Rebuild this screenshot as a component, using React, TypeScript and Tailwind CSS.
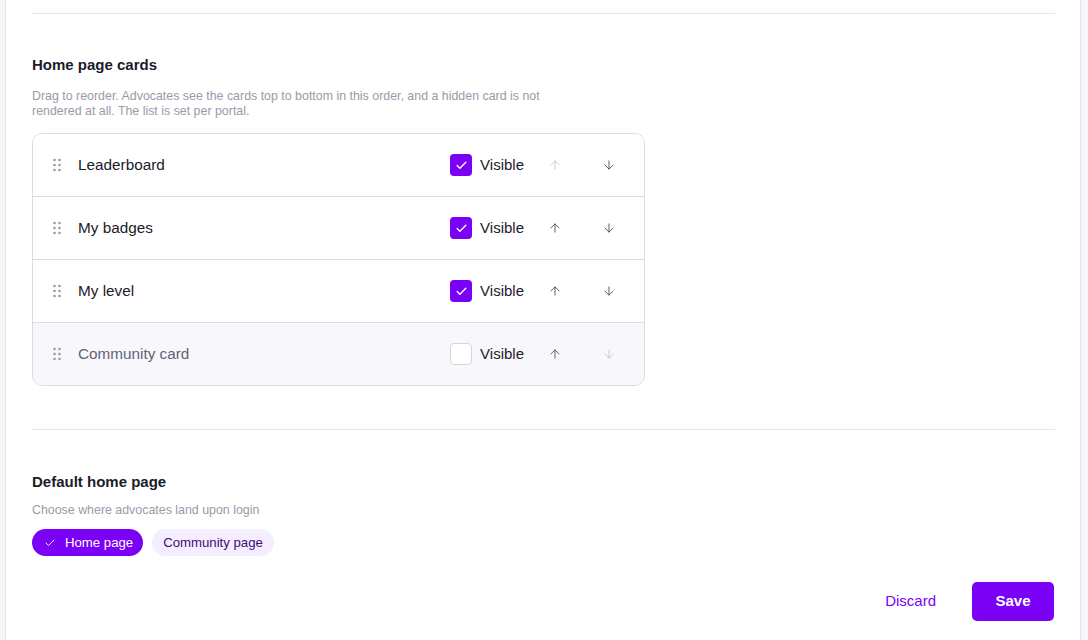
import { ArrowDown, ArrowUp, Check } from "lucide-react";

const cards = [
  { name: "Leaderboard", visible: true },
  { name: "My badges", visible: true },
  { name: "My level", visible: true },
  { name: "Community card", visible: false },
];

const Handle = () => (
  <svg width="8" height="14" viewBox="0 0 8 14" className="shrink-0">
    {[1.5, 6.5].map((x) =>
      [2, 7, 12].map((y) => <circle key={`${x}-${y}`} cx={x} cy={y} r="1.3" fill="#9a9aa6" />)
    )}
  </svg>
);

const App = () => {
  return (
    <div
      className="h-screen w-full overflow-hidden bg-[#f7f7fb] pl-[5px] pr-[7px]"
      style={{ fontFamily: '"Liberation Sans", Arial, sans-serif' }}
    >
      <div className="h-full border-x border-[#e4e4ec] bg-white pl-[26px] pr-[25px] pt-[13px]">
        <div className="border-t border-[#e6e6ec]" />

        {/* Home page cards */}
        <h2 className="mt-[41px] text-[15px] leading-5 font-semibold text-[#1b1b2b]">Home page cards</h2>
        <p className="mt-[14px] max-w-[530px] text-[12.4px] leading-[15px] text-[#9a9aa8]">
          Drag to reorder. Advocates see the cards top to bottom in this order, and a hidden card is not
          rendered at all. The list is set per portal.
        </p>

        <div className="mt-[14px] w-[613px] overflow-hidden rounded-[10px] border border-[#dcdce4]">
          {cards.map((card, i) => {
            const first = i === 0;
            const last = i === cards.length - 1;
            return (
              <div
                key={card.name}
                className={`flex items-center pl-5 pr-[19px] ${last ? "h-[62px] bg-[#f8f8fc]" : "h-[63px] border-b border-[#dcdce4] bg-white"}`}
              >
                <Handle />
                <span
                  className={`ml-[17px] flex-1 text-[15.3px] ${card.visible ? "text-[#1b1b2b]" : "text-[#5d6475]"}`}
                >
                  {card.name}
                </span>
                <div className="flex items-center gap-2">
                  {card.visible ? (
                    <span className="flex h-[22px] w-[22px] items-center justify-center rounded-[4px] bg-[#7b00f6]">
                      <Check size={13} strokeWidth={2.5} color="#ffffff" />
                    </span>
                  ) : (
                    <span className="h-[22px] w-[22px] rounded-[4px] border border-[#d4d4dc] bg-white" />
                  )}
                  <span className="text-[15px] text-[#1b1b2b]">Visible</span>
                </div>
                <button className="ml-[15px] flex h-8 w-8 items-center justify-center">
                  <ArrowUp size={14} strokeWidth={1.5} color={first ? "#c4c4cc" : "#4a4a55"} />
                </button>
                <button className="ml-[22px] flex h-8 w-8 items-center justify-center">
                  <ArrowDown size={14} strokeWidth={1.5} color={last ? "#c4c4cc" : "#4a4a55"} />
                </button>
              </div>
            );
          })}
        </div>

        <div className="mt-[43px] border-t border-[#e6e6ec]" />

        {/* Default home page */}
        <h2 className="mt-[42px] text-[15px] leading-5 font-semibold text-[#1b1b2b]">Default home page</h2>
        <p className="mt-[11px] text-[12.4px] leading-[15px] text-[#9a9aa8]">Choose where advocates land upon login</p>
        <div className="mt-[11px] flex gap-[9px]">
          <button className="flex h-[27px] items-center gap-[9px] rounded-full bg-[#7b00f6] pl-3 pr-[10px] text-[13.2px] text-white">
            <Check size={12} strokeWidth={1.8} color="#ffffff" />
            Home page
          </button>
          <button className="flex h-[27px] items-center rounded-full bg-[#f5eeff] px-[11px] text-[13.2px] text-[#3d0a78]">
            Community page
          </button>
        </div>

        <div className="mt-[26px] flex items-center justify-end gap-[20px] pr-px">
          <button className="h-[39px] px-4 text-[15px] text-[#7b00f6]">Discard</button>
          <button className="h-[39px] w-[82px] rounded-[5px] bg-[#7b00f6] text-[15px] font-bold text-white">
            Save
          </button>
        </div>
      </div>
    </div>
  );
};

export default App;
